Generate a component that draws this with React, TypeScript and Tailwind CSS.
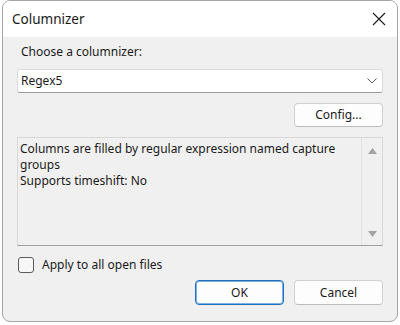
import React from "react";

const font = { fontFamily: '"Noto Sans", "Open Sans", Arial, sans-serif' };

function Btn({ children, primary, tall }: { children: React.ReactNode; primary?: boolean; tall?: boolean }) {
  const h = tall ? "h-[25px]" : "h-[24px]";
  return (
    <button
      type="button"
      className={
        primary
          ? `${h} w-[89px] rounded-[4px] border border-[#1f6fc0] bg-[#fdfdfd] text-[12px] text-[#1b1b1b] shadow-[inset_0_0_0_1px_#7fb0e0]`
          : `${h} w-[89px] rounded-[4px] border border-[#d0d0d0] border-b-[#bdbdbd] bg-[#fdfdfd] text-[12px] text-[#1b1b1b]`
      }
    >
      {children}
    </button>
  );
}

export default function App() {
  return (
    <div className="h-[325px] w-[400px] overflow-hidden bg-white pl-[2px]" style={font}>
      <div className="flex h-[322px] w-[396px] flex-col overflow-hidden rounded-[8px] border border-[#a6a6a6] bg-[#f0f0f0]">
        {/* title bar */}
        <div className="flex h-[36px] shrink-0 items-center justify-between bg-white pl-[9px] pr-[10px]">
          <span className="text-[13.5px] text-[#1a1a1a]">Columnizer</span>
          <svg width="14" height="14" viewBox="0 0 14 14" className="mr-[1px]">
            <path d="M1 1 L13 13 M13 1 L1 13" stroke="#1a1a1a" strokeWidth="1.1" />
          </svg>
        </div>

        {/* body */}
        <div className="flex flex-1 flex-col px-[14px] pt-[7px]">
          <div className="h-[16px] pl-[4px] text-[12px] leading-[16px] text-[#1a1a1a]">Choose a columnizer:</div>

          <div className="mt-[9px] flex h-[24px] items-center justify-between rounded-[3px] border border-[#dadada] border-b-[#9a9a9a] bg-white pl-[3px] pr-[5px] text-[12px] text-[#1a1a1a]">
            <span>Regex5</span>
            <svg width="10" height="6" viewBox="0 0 10 6">
              <path d="M0.5 0.5 L5 5 L9.5 0.5" fill="none" stroke="#5a5a5a" strokeWidth="1" />
            </svg>
          </div>

          <div className="mt-[10px] flex justify-end">
            <Btn>Config...</Btn>
          </div>

          <div className="mt-[10px] flex h-[109px] border border-[#d8d8d8] border-b-[#a0a0a0] bg-[#f0f0f0]">
            <div className="flex-1 pl-[2px] pt-[3px] text-[12px] leading-[16px] text-[#1a1a1a]">
              Columns are filled by regular expression named capture groups
              <br />
              Supports timeshift: No
            </div>
            <div className="flex w-[21px] flex-col items-center justify-between border-l border-[#e2e2e2] pb-[8px] pt-[10px]">
              <svg width="9" height="6" viewBox="0 0 9 6">
                <path d="M4.5 0 L9 6 L0 6 Z" fill="#a3a3a3" />
              </svg>
              <svg width="9" height="6" viewBox="0 0 9 6">
                <path d="M0 0 L9 0 L4.5 6 Z" fill="#a3a3a3" />
              </svg>
            </div>
          </div>

          <div className="mt-[10px] flex items-center gap-[8px] pl-[1px]">
            <div className="h-[16px] w-[16px] rounded-[3px] border border-[#5c5c5c] bg-[#f7f7f7]" />
            <span className="text-[12px] text-[#1a1a1a]">Apply to all open files</span>
          </div>

          <div className="mt-[6px] flex justify-end gap-[10px]">
            <Btn primary tall>OK</Btn>
            <Btn tall>Cancel</Btn>
          </div>
        </div>
      </div>
    </div>
  );
}
